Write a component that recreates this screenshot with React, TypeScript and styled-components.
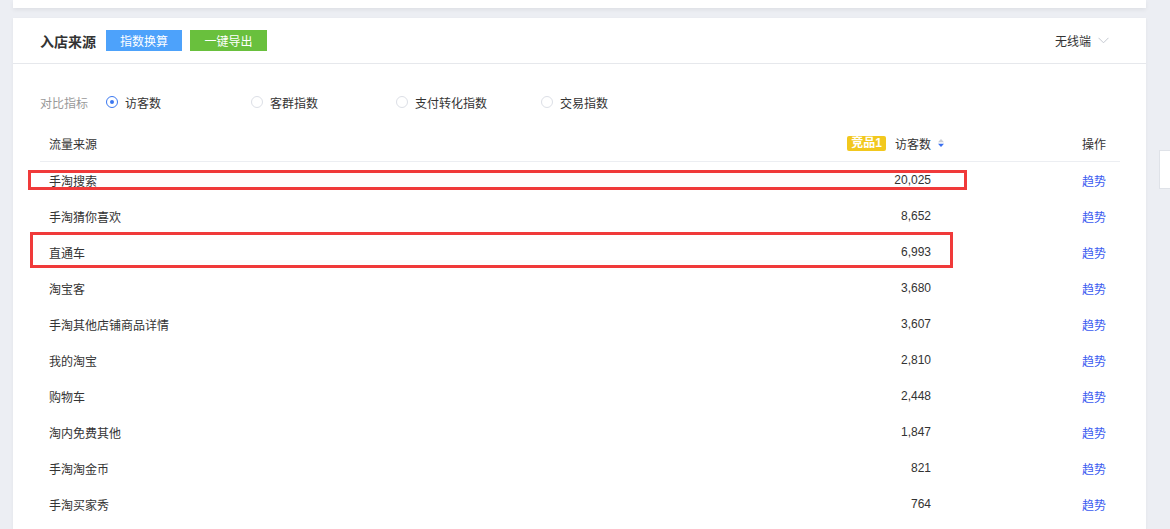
import styled, { createGlobalStyle } from "styled-components";

const GlobalStyle = createGlobalStyle`
	html, body {
		margin: 0;
		padding: 0;
		background: #eceef3;
		overflow: hidden;
	}
	body {
		font-family: "Liberation Sans", "Noto Sans CJK SC", sans-serif;
		font-size: 12px;
		color: #333;
	}
`;

interface Source {
	name: string;
	value: string;
	mark?: { left: number; top: number; width: number; height: number };
}

const sources: Source[] = [
	{ name: "手淘搜索", value: "20,025", mark: { left: -12, top: 8, width: 939, height: 20 } },
	{ name: "手淘猜你喜欢", value: "8,652" },
	{ name: "直通车", value: "6,993", mark: { left: -10, top: -2, width: 923, height: 36 } },
	{ name: "淘宝客", value: "3,680" },
	{ name: "手淘其他店铺商品详情", value: "3,607" },
	{ name: "我的淘宝", value: "2,810" },
	{ name: "购物车", value: "2,448" },
	{ name: "淘内免费其他", value: "1,847" },
	{ name: "手淘淘金币", value: "821" },
	{ name: "手淘买家秀", value: "764" },
];

const metrics = ["访客数", "客群指数", "支付转化指数", "交易指数"];

const Page = styled.div`
	display: flex;
	gap: 13px;
	padding-left: 13px;
	width: 1170px;
	height: 529px;
	box-sizing: border-box;
	overflow: hidden;
`;

const Column = styled.div`
	width: 1133px;
	flex-shrink: 0;
	display: flex;
	flex-direction: column;
	gap: 10px;
`;

const TopCard = styled.div`
	height: 8px;
	background: #fff;
	box-shadow: 0 2px 4px rgba(0, 0, 0, 0.06);
`;

const Card = styled.section`
	background: #fff;
	flex: 1;
	box-shadow: 0 1px 3px rgba(0, 0, 0, 0.05);
`;

const CardHeader = styled.header`
	height: 45px;
	display: flex;
	align-items: center;
	padding: 0 37px 0 27px;
	border-bottom: 1px solid #e6e8ec;
`;

const Title = styled.h2`
	margin: 0 10px 0 0;
	font-size: 14px;
	font-weight: 700;
	color: #333;
`;

const ActionButton = styled.button<{ $color: string }>`
	height: 21px;
	width: ${({ $color }) => ($color === "green" ? 77 : 76)}px;
	margin-right: 8px;
	border: none;
	padding: 0;
	background: ${({ $color }) => ($color === "green" ? "#69c03d" : "#4da2fb")};
	color: #fff;
	font-family: inherit;
	font-size: 12px;
`;

const Terminal = styled.div`
	margin-left: auto;
	display: flex;
	align-items: center;
	gap: 7px;
	color: #333;
`;

const Body = styled.div`
	padding: 28px 26px 0 27px;
`;

const MetricRow = styled.div`
	height: 20px;
	display: flex;
	align-items: center;
	margin-bottom: 13px;
`;

const MetricLabel = styled.span`
	color: #999;
	width: 66px;
`;

const RadioItem = styled.label`
	width: 145px;
	display: flex;
	align-items: center;
	gap: 7px;
	color: #333;
`;

const RadioDot = styled.span<{ $checked: boolean }>`
	width: 12px;
	height: 12px;
	box-sizing: border-box;
	border-radius: 50%;
	border: 1px solid ${({ $checked }) => ($checked ? "#3b78f0" : "#dcdfe6")};
	display: flex;
	align-items: center;
	justify-content: center;

	&::after {
		content: "";
		width: 4px;
		height: 4px;
		border-radius: 50%;
		background: ${({ $checked }) => ($checked ? "#3b78f0" : "transparent")};
	}
`;

const Row = styled.div<{ $head?: boolean }>`
	position: relative;
	height: 36px;
	display: grid;
	grid-template-columns: 1fr 200px 174px;
	align-items: center;
	border-bottom: ${({ $head }) => ($head ? "1px solid #eceef2" : "none")};
`;

const NameCell = styled.div`
	padding-left: 9px;
	color: #333;
`;

const ValueCell = styled.div`
	display: flex;
	justify-content: flex-end;
	align-items: center;
	padding-right: 15px;
`;

const HeadValueCell = styled(ValueCell)`
	padding-right: 1px;
`;

const Badge = styled.span`
	background: #f2c81e;
	color: #fff;
	font-weight: 700;
	height: 15px;
	line-height: 15px;
	padding: 0 4px;
	border-radius: 2px;
	margin-right: 9px;
`;

const SortIcon = styled.svg`
	margin-left: 6px;
`;

const OpCell = styled.div`
	text-align: right;
	padding-right: 14px;
`;

const TrendLink = styled.a`
	color: #3b5bf0;
	text-decoration: none;
`;

const Mark = styled.div`
	position: absolute;
	border: 3px solid #f03a3a;
	box-sizing: border-box;
	pointer-events: none;
`;

const Rail = styled.div`
	padding-top: 150px;
`;

const RailBox = styled.div`
	width: 40px;
	height: 37px;
	background: #fff;
	border: 1px solid #dfe2e8;
`;

export default function App() {
	return (
		<>
			<GlobalStyle />
			<Page>
				<Column>
					<TopCard />
					<Card>
						<CardHeader>
							<Title>入店来源</Title>
							<ActionButton $color="blue">指数换算</ActionButton>
							<ActionButton $color="green">一键导出</ActionButton>
							<Terminal>
								无线端
								<svg width="11" height="7" viewBox="0 0 11 7">
									<path d="M0.5 0.8 L5.5 5.8 L10.5 0.8" fill="none" stroke="#c4c8d0" strokeWidth="1" />
								</svg>
							</Terminal>
						</CardHeader>
						<Body>
							<MetricRow>
								<MetricLabel>对比指标</MetricLabel>
								{metrics.map((m, i) => (
									<RadioItem key={m}>
										<RadioDot $checked={i === 0} />
										{m}
									</RadioItem>
								))}
							</MetricRow>
							<Row $head>
								<NameCell>流量来源</NameCell>
								<HeadValueCell>
									<Badge>竞品1</Badge>
									访客数
									<SortIcon width="8" height="10" viewBox="0 0 8 10">
										<path d="M4 1 L7 4.2 L1 4.2 Z" fill="#c8ccd4" />
										<path d="M4 9 L7 5.8 L1 5.8 Z" fill="#3a6ff0" />
									</SortIcon>
								</HeadValueCell>
								<OpCell>操作</OpCell>
							</Row>
							{sources.map((s) => (
								<Row key={s.name}>
									<NameCell>{s.name}</NameCell>
									<ValueCell>{s.value}</ValueCell>
									<OpCell>
										<TrendLink>趋势</TrendLink>
									</OpCell>
									{s.mark && (
										<Mark
											style={{
												left: s.mark.left,
												top: s.mark.top,
												width: s.mark.width,
												height: s.mark.height,
											}}
										/>
									)}
								</Row>
							))}
						</Body>
					</Card>
				</Column>
				<Rail>
					<RailBox />
				</Rail>
			</Page>
		</>
	);
}
